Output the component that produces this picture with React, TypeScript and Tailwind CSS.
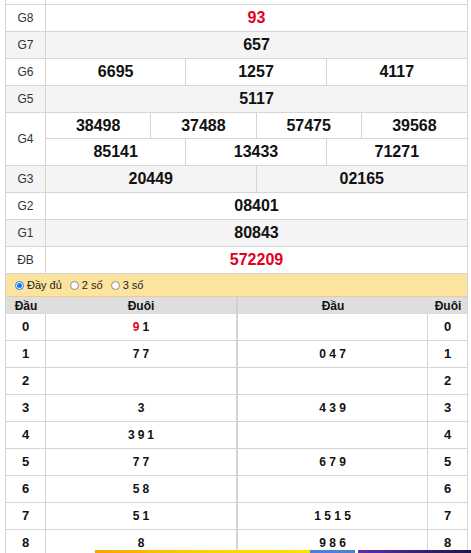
import React from 'react';

const prizes: { label: string; rows: string[][]; red?: boolean; alt?: boolean }[] = [
  { label: 'G8', rows: [['93']], red: true },
  { label: 'G7', rows: [['657']], alt: true },
  { label: 'G6', rows: [['6695', '1257', '4117']] },
  { label: 'G5', rows: [['5117']], alt: true },
  { label: 'G4', rows: [['38498', '37488', '57475', '39568'], ['85141', '13433', '71271']] },
  { label: 'G3', rows: [['20449', '02165']], alt: true },
  { label: 'G2', rows: [['08401']] },
  { label: 'G1', rows: [['80843']], alt: true },
  { label: 'ĐB', rows: [['572209']], red: true },
];

const loto: { head: string; tail: string[]; right: string }[] = [
  { head: '0', tail: ['9', '1'], right: '' },
  { head: '1', tail: ['7', '7'], right: '0 4 7' },
  { head: '2', tail: [], right: '' },
  { head: '3', tail: ['3'], right: '4 3 9' },
  { head: '4', tail: ['3', '9', '1'], right: '' },
  { head: '5', tail: ['7', '7'], right: '6 7 9' },
  { head: '6', tail: ['5', '8'], right: '' },
  { head: '7', tail: ['5', '1'], right: '1 5 1 5' },
  { head: '8', tail: ['8'], right: '9 8 6' },
];

const gridCols: Record<number, string> = {
  1: 'grid-cols-1',
  2: 'grid-cols-2',
  3: 'grid-cols-3',
  4: 'grid-cols-4',
};

function Radio({ checked, label }: { checked?: boolean; label: string }) {
  return (
    <label className="flex items-center gap-[3px]">
      <span
        className={
          checked
            ? 'w-[9px] h-[9px] rounded-full border border-[#1a73e8] flex items-center justify-center bg-white'
            : 'w-[9px] h-[9px] rounded-full border border-[#8a8a8a] bg-white'
        }
      >
        {checked && <span className="w-[5px] h-[5px] rounded-full bg-[#1a73e8]" />}
      </span>
      <span>{label}</span>
    </label>
  );
}

export default function App() {
  return (
    <div
      className="relative bg-white w-[471px] h-[553px] overflow-hidden text-[#111]"
      style={{ fontFamily: '"Liberation Sans", Arial, sans-serif' }}
    >
      <div className="ml-[5px] w-[463px] border-x border-[#d5d5d5]">
        {/* phần dưới của hàng phía trên */}
        <div className="flex h-[5px] border-b border-[#d5d5d5]">
          <div className="w-[40px] border-r border-[#d5d5d5]" />
          <div className="flex-1" />
        </div>

        {/* Bảng giải */}
        {prizes.map((p) => (
          <div
            key={p.label}
            className={
              'flex border-b border-[#d5d5d5] ' + (p.alt ? 'bg-[#f4f4f4]' : 'bg-white')
            }
          >
            <div className="w-[40px] shrink-0 border-r border-[#d5d5d5] flex items-center justify-center text-[12px] text-[#333]">
              {p.label}
            </div>
            <div className="flex-1 flex flex-col divide-y divide-[#d5d5d5]">
              {p.rows.map((row, ri) => (
                <div
                  key={ri}
                  className={'grid h-[26px] divide-x divide-[#d5d5d5] ' + gridCols[row.length]}
                >
                  {row.map((n) => (
                    <div
                      key={n}
                      className={
                        'flex items-center justify-center text-[16px] font-bold ' +
                        (p.red ? 'text-[#e2001d]' : 'text-[#111]')
                      }
                    >
                      {n}
                    </div>
                  ))}
                </div>
              ))}
            </div>
          </div>
        ))}

        {/* Chọn kiểu hiển thị */}
        <div className="h-[23px] bg-[#fde49e] flex items-center gap-[8px] pl-[9px] text-[11px] text-[#222] border-b border-[#e8d08a]">
          <Radio checked label="Đầy đủ" />
          <Radio label="2 số" />
          <Radio label="3 số" />
        </div>

        {/* Bảng loto */}
        <div className="flex h-[17px] bg-[#dedede] text-[12px] font-bold text-[#111]">
          <div className="w-[40px] flex items-center justify-center">Đầu</div>
          <div className="w-[190px] flex items-center justify-center">Đuôi</div>
          <div className="w-[2px] bg-[#d0d0d0]" />
          <div className="w-[190px] flex items-center justify-center">Đầu</div>
          <div className="w-[1px]" />
          <div className="flex-1 flex items-center justify-center">Đuôi</div>
        </div>
        {loto.map((r) => (
          <div key={r.head} className="flex h-[27px] border-b border-[#d5d5d5] text-[12px] font-bold text-[#111]">
            <div className="w-[40px] border-r border-[#d5d5d5] flex items-center justify-center text-[13px]">
              {r.head}
            </div>
            <div className="w-[190px] flex items-center justify-center gap-[3px]">
              {r.tail.map((d, i) => (
                <span key={i} className={r.head === '0' && i === 0 ? 'text-[#e2001d]' : ''}>
                  {d}
                </span>
              ))}
            </div>
            <div className="w-[2px] bg-[#d5d5d5]" />
            <div className="w-[190px] border-r border-[#d5d5d5] flex items-center justify-center whitespace-pre">
              {r.right}
            </div>
            <div className="flex-1 flex items-center justify-center text-[13px]">{r.head}</div>
          </div>
        ))}
      </div>

      {/* quảng cáo phía dưới */}
      <div className="absolute bottom-0 left-[95px] right-0 h-[3px] flex">
        <div className="w-[215px] bg-gradient-to-r from-[#f7a400] via-[#ffd000] to-[#ffe000]" />
        <div className="w-[45px] bg-[#4a82d4]" />
        <div className="w-[3px] bg-white" />
        <div className="flex-1 bg-gradient-to-r from-[#5a2fb0] to-[#1a1650]" />
      </div>
    </div>
  );
}
